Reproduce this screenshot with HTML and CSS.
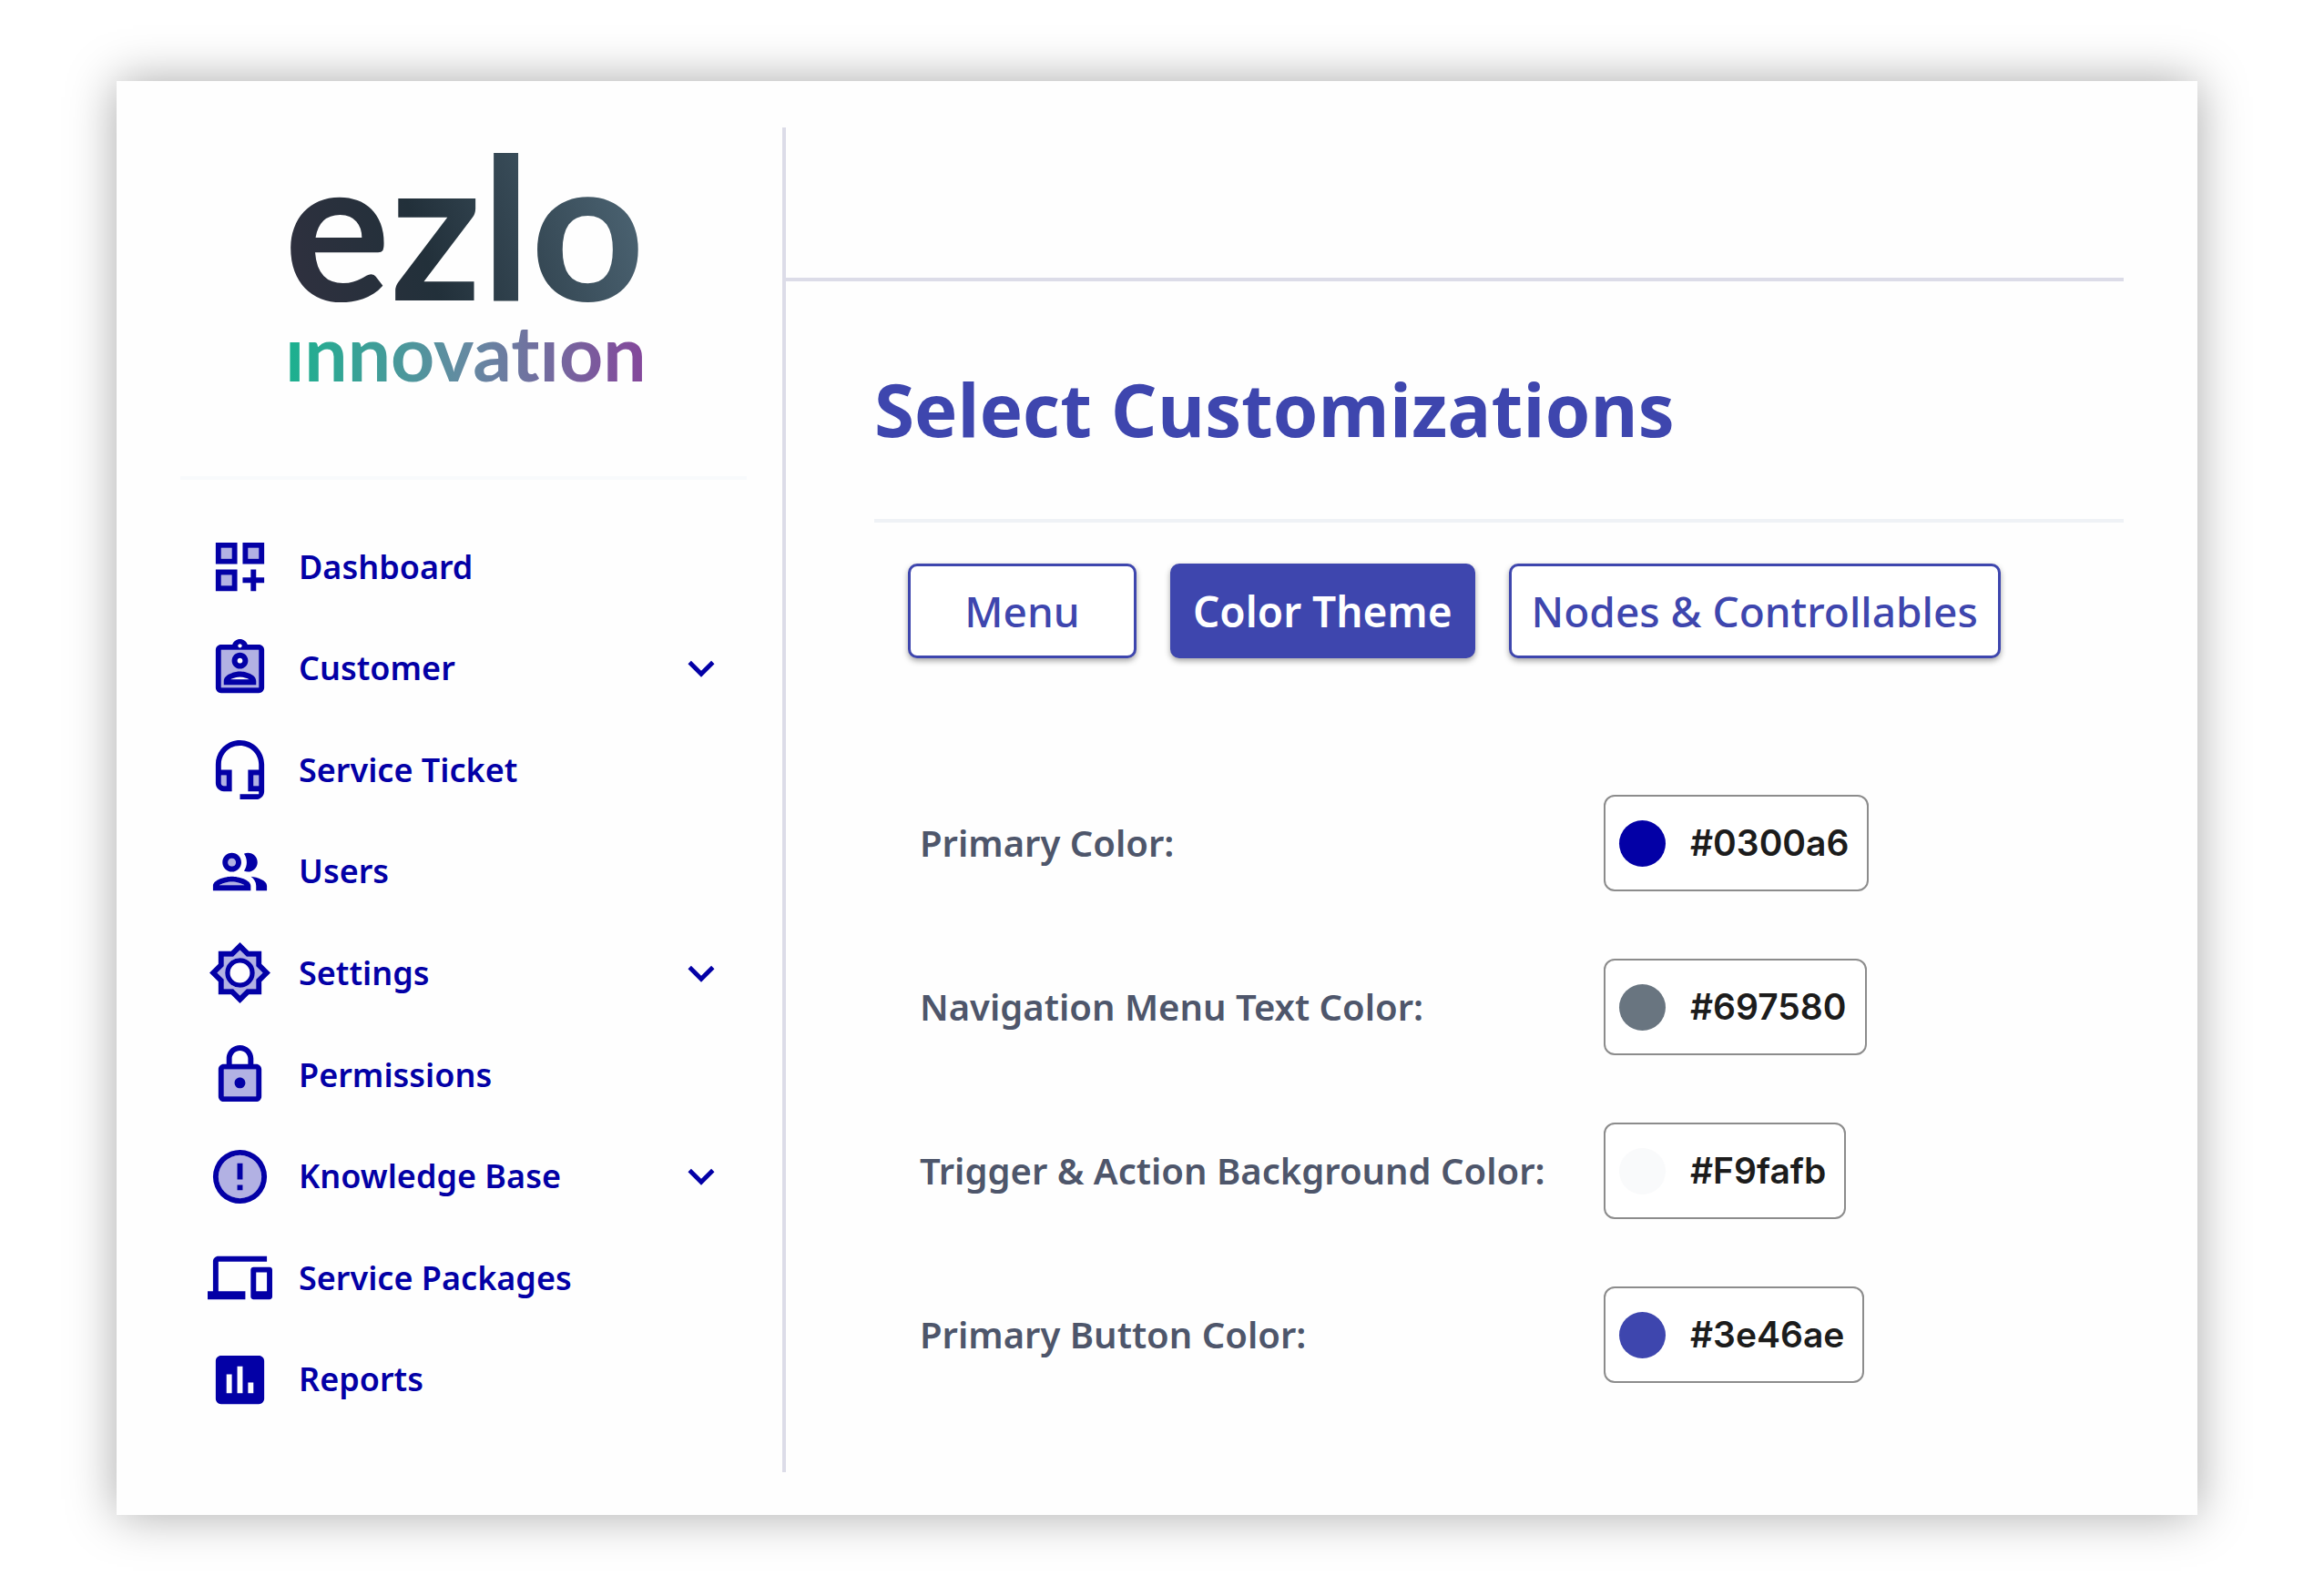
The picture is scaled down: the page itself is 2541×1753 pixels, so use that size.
FILE: index.html
```html
<!DOCTYPE html>
<html lang="en">
<head>
  <meta charset="utf-8">
  <meta name="viewport" content="width=device-width, initial-scale=1">
  <title>Select Customizations</title>
  <link rel="stylesheet" href="styles.css">
</head>
<body>
  <div class="card">
    <aside class="sidebar">
      <div class="brand">
        <svg class="logo" viewBox="0 0 400 264" role="img" aria-label="ezlo innovation">
          <defs>
            <linearGradient id="slate" gradientUnits="userSpaceOnUse" x1="10" y1="190" x2="398" y2="60">
              <stop offset="0" stop-color="#30303f"/>
              <stop offset=".4" stop-color="#22303a"/>
              <stop offset="1" stop-color="#4c6473"/>
            </linearGradient>
            <linearGradient id="rainbow" gradientUnits="userSpaceOnUse" x1="10" y1="0" x2="398" y2="0">
              <stop offset="0" stop-color="#1db08f"/>
              <stop offset=".5" stop-color="#658aa2"/>
              <stop offset="1" stop-color="#84479b"/>
            </linearGradient>
            <clipPath id="dotless">
              <rect x="0" y="207" width="410" height="56"/>
              <rect x="256" y="190" width="30" height="30"/>
            </clipPath>
          </defs>
          <text class="logo-name" x="3" y="165" fill="url(#slate)">ezlo</text>
          <text class="logo-tag" x="4" y="254" fill="url(#rainbow)" clip-path="url(#dotless)">innovation</text>
        </svg>
      </div>
      <nav class="menu" aria-label="Main">
        <a class="item" href="#dashboard">
          <svg class="icon" viewBox="0 0 24 24" aria-hidden="true"><path class="tint" d="M5 5h4v4H5zM5 15h4v4H5zM15 5h4v4h-4z"/><path d="M3 11h8V3H3v8zm2-6h4v4H5V5zm8-2v8h8V3h-8zm6 6h-4V5h4v4zM3 21h8v-8H3v8zm2-6h4v4H5v-4zm13-2h-2v3h-3v2h3v3h2v-3h3v-2h-3z"/></svg>
          <span>Dashboard</span>
        </a>
        <a class="item" href="#customer">
          <svg class="icon" viewBox="0 0 24 24" aria-hidden="true"><path class="tint" fill-rule="evenodd" d="M5 5h14v14H5zM12 8a1 1 0 1 0 0 2 1 1 0 0 0 0-2zM8.480 16h7.040c-.74-.51-2.230-1-3.520-1s-2.780.49-3.520 1z"/><path d="M12 12c1.65 0 3-1.35 3-3s-1.35-3-3-3-3 1.35-3 3 1.35 3 3 3zm0-4c.55 0 1 .45 1 1s-.45 1-1 1-1-.45-1-1 .45-1 1-1zm6 8.580c0-2.500-3.970-3.580-6-3.580s-6 1.080-6 3.580V18h12v-1.420zM8.480 16c.74-.51 2.230-1 3.520-1s2.780.49 3.520 1H8.480zM19 3h-4.180C14.400 1.840 13.300 1 12 1s-2.400.84-2.820 2H5c-1.100 0-2 .9-2 2v14c0 1.100.9 2 2 2h14c1.100 0 2-.9 2-2V5c0-1.100-.9-2-2-2zm-7-.25c.41 0 .75.34.75.75s-.34.75-.75.75-.75-.34-.75-.75.34-.75.75-.75zM19 19H5V5h14v14z"/></svg>
          <span>Customer</span>
          <svg class="chevron" viewBox="0 0 24 24" aria-hidden="true"><path d="M16.590 8.590 12 13.170 7.410 8.590 6 10l6 6 6-6z"/></svg>
        </a>
        <a class="item" href="#service-ticket">
          <svg class="icon" viewBox="0 0 24 24" aria-hidden="true"><path class="tint" d="M7 14v4H6c-.55 0-1-.45-1-1v-3zM17 14h2v4h-2z"/><path d="M12 1c-4.970 0-9 4.030-9 9v7c0 1.660 1.340 3 3 3h3v-8H5v-2c0-3.870 3.130-7 7-7s7 3.130 7 7v2h-4v8h4v1h-7v2h6c1.660 0 3-1.340 3-3V10c0-4.970-4.030-9-9-9zM7 14v4H6c-.55 0-1-.45-1-1v-3h2zm12 4h-2v-4h2v4z"/></svg>
          <span>Service Ticket</span>
        </a>
        <a class="item" href="#users">
          <svg class="icon" viewBox="0 0 24 24" aria-hidden="true"><path class="tint" d="M4.340 17h9.320c-.84-.58-2.870-1.250-4.660-1.250s-3.820.67-4.660 1.250zM9 7a1.500 1.500 0 1 0 0 3 1.500 1.500 0 0 0 0-3z"/><path d="M9 13.750c-2.340 0-7 1.170-7 3.500V19h14v-1.750c0-2.330-4.660-3.500-7-3.500zM4.340 17c.84-.58 2.870-1.250 4.660-1.250s3.820.67 4.660 1.250H4.340zM9 12c1.930 0 3.500-1.570 3.500-3.500S10.930 5 9 5 5.500 6.570 5.500 8.500 7.070 12 9 12zm0-5c.83 0 1.500.67 1.500 1.500S9.830 10 9 10s-1.500-.67-1.500-1.500S8.170 7 9 7zm7.040 6.810c1.160.84 1.960 1.960 1.960 3.440V19h4v-1.750c0-2.020-3.500-3.170-5.960-3.440zM15 12c1.930 0 3.500-1.570 3.500-3.500S16.930 5 15 5c-.54 0-1.040.13-1.500.35.63.89 1 1.980 1 3.150s-.37 2.260-1 3.150c.46.22.96.35 1.500.35z"/></svg>
          <span>Users</span>
        </a>
        <a class="item" href="#settings">
          <svg class="icon" viewBox="0 0 24 24" aria-hidden="true"><path class="tint" fill-rule="evenodd" d="M18 9.520V6h-3.520L12 3.520 9.520 6H6v3.520L3.520 12 6 14.480V18h3.520L12 20.480 14.480 18H18v-3.520L20.480 12zM12 17.500a5.500 5.500 0 1 1 0-11 5.500 5.500 0 0 1 0 11z"/><path fill-rule="evenodd" d="M20 8.690V4h-4.690L12 .69 8.690 4H4v4.690L.69 12 4 15.310V20h4.690L12 23.310 15.310 20H20v-4.690L23.310 12 20 8.690zm-2 5.790V18h-3.520L12 20.480 9.520 18H6v-3.520L3.520 12 6 9.520V6h3.520L12 3.520 14.480 6H18v3.520L20.480 12 18 14.480zM12 6.500a5.500 5.500 0 1 0 0 11 5.500 5.500 0 0 0 0-11zm0 9.200a3.700 3.700 0 1 1 0-7.400 3.700 3.700 0 0 1 0 7.400z"/></svg>
          <span>Settings</span>
          <svg class="chevron" viewBox="0 0 24 24" aria-hidden="true"><path d="M16.590 8.590 12 13.170 7.410 8.590 6 10l6 6 6-6z"/></svg>
        </a>
        <a class="item" href="#permissions">
          <svg class="icon" viewBox="0 0 24 24" aria-hidden="true"><path class="tint" d="M6 10h12v10H6z"/><path d="M18 8h-1V6c0-2.760-2.240-5-5-5S7 3.240 7 6v2H6c-1.100 0-2 .9-2 2v10c0 1.100.9 2 2 2h12c1.100 0 2-.9 2-2V10c0-1.100-.9-2-2-2zM9 6c0-1.660 1.340-3 3-3s3 1.340 3 3v2H9V6zm9 14H6V10h12v10zm-6-3c1.100 0 2-.9 2-2s-.9-2-2-2-2 .9-2 2 .9 2 2 2z"/></svg>
          <span>Permissions</span>
        </a>
        <a class="item" href="#knowledge-base">
          <svg class="icon" viewBox="0 0 24 24" aria-hidden="true"><circle class="tint" cx="12" cy="12" r="8"/><path fill-rule="evenodd" d="M11 15h2v2h-2zm0-8h2v6h-2zM12 2a10 10 0 1 0 0 20 10 10 0 0 0 0-20zm0 18a8 8 0 1 1 0-16 8 8 0 0 1 0 16z"/></svg>
          <span>Knowledge Base</span>
          <svg class="chevron" viewBox="0 0 24 24" aria-hidden="true"><path d="M16.590 8.590 12 13.170 7.410 8.590 6 10l6 6 6-6z"/></svg>
        </a>
        <a class="item" href="#service-packages">
          <svg class="icon" viewBox="0 0 24 24" aria-hidden="true"><path d="M4 6h18V4H4c-1.100 0-2 .9-2 2v11H0v3h14v-3H4V6zm19 2h-6c-.55 0-1 .45-1 1v10c0 .55.45 1 1 1h6c.55 0 1-.45 1-1V9c0-.55-.45-1-1-1zm-1 9h-4v-7h4v7z"/></svg>
          <span>Service Packages</span>
        </a>
        <a class="item" href="#reports">
          <svg class="icon" viewBox="0 0 24 24" aria-hidden="true"><path d="M19 3H5c-1.100 0-2 .9-2 2v14c0 1.100.9 2 2 2h14c1.100 0 2-.9 2-2V5c0-1.100-.9-2-2-2zM9 17H7v-7h2v7zm4 0h-2V7h2v10zm4 0h-2v-4h2v4z"/></svg>
          <span>Reports</span>
        </a>
      </nav>
    </aside>
    <div class="page">
      <header class="topbar"></header>
      <main class="content">
        <h1 class="title">Select Customizations</h1>
        <div class="tabs">
          <button class="tab tab-menu" type="button">Menu</button>
          <button class="tab tab-active" type="button">Color Theme</button>
          <button class="tab" type="button">Nodes &amp; Controllables</button>
        </div>
        <form class="colors">
          <label class="label" for="primary">Primary Color:</label>
          <button class="color" id="primary" type="button"><span class="swatch" style="background:#0300a6"></span>#0300a6</button>
          <label class="label" for="nav-text">Navigation Menu Text Color:</label>
          <button class="color" id="nav-text" type="button"><span class="swatch" style="background:#697580"></span>#697580</button>
          <label class="label" for="trigger">Trigger &amp; Action Background Color:</label>
          <button class="color" id="trigger" type="button"><span class="swatch" style="background:#f9fafb"></span>#F9fafb</button>
          <label class="label" for="button-color">Primary Button Color:</label>
          <button class="color" id="button-color" type="button"><span class="swatch" style="background:#3e46ae"></span>#3e46ae</button>
        </form>
      </main>
    </div>
  </div>
</body>
</html>
```
FILE: styles.css
```css
* {
  box-sizing: border-box;
}

body {
  margin: 0;
  min-height: 100vh;
  padding: 89px 128px;
  display: flex;
  background: #fff;
  font-family: "Noto Sans", "Open Sans", sans-serif;
}

.card {
  flex: 1;
  display: flex;
  padding: 51px 81px 47px 70px;
  background: #fefefe;
  box-shadow: 0 0 50px rgba(0, 0, 0, 0.34);
}

/* Sidebar */
.sidebar {
  flex: 0 0 665px;
  padding-right: 39px;
  border-right: 4px solid #dcdce8;
}

.brand {
  display: flex;
  justify-content: center;
  padding: 25px 0 94px;
  border-bottom: 4px solid #f8fafc;
}

.logo {
  width: 400px;
  height: 264px;
  overflow: visible;
}

.logo-name {
  font-family: Lato, sans-serif;
  font-size: 218px;
  font-weight: 700;
}

.logo-tag {
  font-family: Lato, sans-serif;
  font-size: 84px;
  font-weight: 700;
  font-variant-ligatures: none;
}

.menu {
  display: grid;
  grid-template-rows: repeat(9, 1fr);
  height: 1004px;
  margin-top: 40px;
  padding: 0 21px 0 30px;
}

.item {
  display: flex;
  align-items: center;
  gap: 29px;
  color: #0300a6;
  font: 600 36px/48px "Noto Sans", "Open Sans", sans-serif;
  text-decoration: none;
}

.icon {
  flex: none;
  width: 71px;
  height: 71px;
  fill: currentColor;
}

.tint {
  opacity: 0.3;
}

.chevron {
  width: 58px;
  height: 58px;
  margin-left: auto;
  fill: currentColor;
}

/* Page */
.page {
  flex: 1;
}

.topbar {
  height: 169px;
  border-bottom: 4px solid #dcdce8;
}

.content {
  padding-left: 97px;
}

.title {
  margin: 0;
  padding: 92px 0 73px;
  border-bottom: 4px solid #eff2f6;
  color: #3e46ae;
  font-family: "Open Sans", sans-serif;
  font-size: 80px;
  font-weight: 700;
  line-height: 96px;
}

.tabs {
  display: flex;
  gap: 37px;
  padding: 45px 37px 0;
}

.tab {
  height: 104px;
  padding: 0 22px;
  border: 3px solid #3e46ae;
  border-radius: 10px;
  background: #fff;
  box-shadow: 0 3px 6px rgba(0, 0, 0, 0.35);
  color: #3e46ae;
  font: 500 46px/56px "Noto Sans", sans-serif;
}

.tab-menu {
  min-width: 251px;
}

.tab-active {
  background: #3e46ae;
  color: #fff;
  font-weight: 600;
}

.colors {
  display: grid;
  grid-template-columns: 751px 1fr;
  row-gap: 74px;
  align-items: center;
  padding: 150px 0 0 50px;
}

.label {
  color: #4e566b;
  font-size: 40px;
  font-weight: 600;
  line-height: 56px;
}

.color {
  justify-self: start;
  display: flex;
  align-items: center;
  gap: 27px;
  height: 106px;
  padding: 0 20px 0 15px;
  border: 2px solid #8c8c8c;
  border-radius: 12px;
  background: #fff;
  color: #1c1c1c;
  font: 600 39px/56px Inter, sans-serif;
}

.swatch {
  width: 51px;
  height: 51px;
  border-radius: 50%;
}
```
